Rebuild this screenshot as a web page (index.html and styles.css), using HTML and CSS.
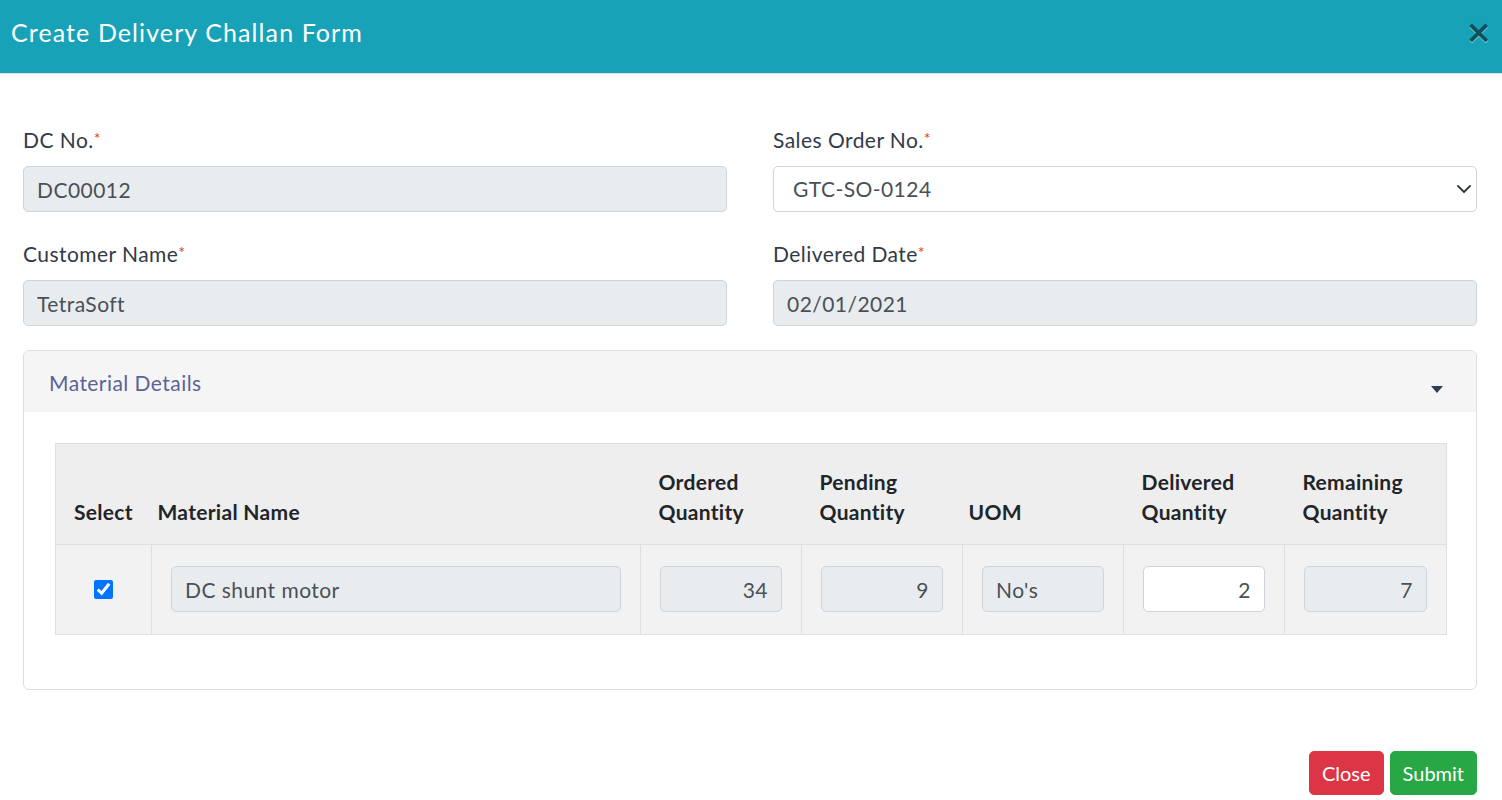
FILE: index.html
```html
<!DOCTYPE html>
<html lang="en">
<head>
<meta charset="utf-8">
<title>Create Delivery Challan Form</title>
<link rel="stylesheet" href="styles.css">
</head>
<body>
<div class="modal">
  <header class="modal-header">
    <h1 class="modal-title">Create Delivery Challan Form</h1>
    <button class="close" type="button" aria-label="Close">×</button>
  </header>
  <main class="modal-body">
    <div class="form-grid">
      <div class="form-group">
        <label class="form-label">DC No.<span class="req">*</span></label>
        <input class="form-control" type="text" value="DC00012" disabled>
      </div>
      <div class="form-group">
        <label class="form-label">Sales Order No.<span class="req">*</span></label>
        <div class="select-wrap">
          <select class="form-control form-select">
            <option>GTC-SO-0124</option>
          </select>
          <svg class="select-chevron" width="14" height="8" viewBox="0 0 14 8"><path d="M1 1l6 6 6-6" fill="none" stroke="#343a40" stroke-width="1.8" stroke-linecap="round" stroke-linejoin="round"/></svg>
        </div>
      </div>
      <div class="form-group">
        <label class="form-label">Customer Name<span class="req">*</span></label>
        <input class="form-control" type="text" value="TetraSoft" disabled>
      </div>
      <div class="form-group">
        <label class="form-label">Delivered Date<span class="req">*</span></label>
        <input class="form-control" type="text" value="02/01/2021" disabled>
      </div>
    </div>

    <section class="card">
      <div class="card-header">
        <span class="card-title">Material Details</span>
        <svg class="caret" width="12" height="7" viewBox="0 0 12 7"><path d="M0 0h12L6 7z" fill="#2c3e50"/></svg>
      </div>
      <div class="card-body">
        <table class="table">
          <colgroup>
            <col style="width:96px"><col style="width:489px"><col style="width:161px"><col style="width:161px"><col style="width:161px"><col style="width:161px"><col style="width:162px">
          </colgroup>
          <thead>
            <tr>
              <th>Select</th>
              <th class="th-tight">Material Name</th>
              <th>Ordered Quantity</th>
              <th>Pending Quantity</th>
              <th class="th-tight">UOM</th>
              <th>Delivered Quantity</th>
              <th>Remaining Quantity</th>
            </tr>
          </thead>
          <tbody>
            <tr>
              <td class="td-check"><input class="check" type="checkbox" checked></td>
              <td><input class="form-control" type="text" value="DC shunt motor" disabled></td>
              <td><input class="form-control num" type="text" value="34" disabled></td>
              <td><input class="form-control num" type="text" value="9" disabled></td>
              <td><input class="form-control" type="text" value="No's" disabled></td>
              <td><input class="form-control num editable" type="text" value="2"></td>
              <td><input class="form-control num" type="text" value="7" disabled></td>
            </tr>
          </tbody>
        </table>
      </div>
    </section>
  </main>
  <footer class="modal-footer">
    <button class="btn btn-danger" type="button">Close</button>
    <button class="btn btn-success" type="button">Submit</button>
  </footer>
</div>
</body>
</html>
```
FILE: styles.css
```css
* { box-sizing: border-box; }
html, body { margin: 0; padding: 0; background: #fff; }
body {
  font-family: Lato, "Open Sans", "Liberation Sans", sans-serif;
  font-size: 21px;
  line-height: 30px;
  letter-spacing: 0.45px;
  color: #313a46;
  width: 1502px;
  height: 800px;
  overflow: hidden;
}

.modal-header {
  height: 74px;
  background: #18a2b8;
  border-bottom: 1px solid #e3e6e9;
  display: flex;
  justify-content: space-between;
  align-items: flex-start;
  padding: 14px 10px 0 11px;
}
.modal-title {
  margin: 0;
  font-size: 25px;
  line-height: 36px;
  font-weight: 400;
  color: #fff;
  letter-spacing: 1.1px;
}
.close {
  background: none;
  border: 0;
  padding: 0;
  margin-top: -2px;
  font-family: "DejaVu Sans", sans-serif;
  font-size: 32px;
  line-height: 40px;
  font-weight: 700;
  color: #000;
  opacity: .5;
  text-shadow: 0 1px 0 #fff;
  cursor: pointer;
}

.modal-body {
  padding: 51px 25px 0 23px;
}
.form-grid {
  display: grid;
  grid-template-columns: 1fr 1fr;
  column-gap: 46px;
}
.form-group { margin-bottom: 27px; }
.form-grid .form-group:nth-child(n+3) { margin-bottom: 24px; }
.form-label {
  display: block;
  height: 30px;
  margin-bottom: 11px;
  color: #313a46;
}
.req {
  color: #e3342f;
  font-size: 16px;
  line-height: 0;
  vertical-align: 4px;
  letter-spacing: 0;
}

.form-control {
  display: block;
  width: 100%;
  height: 46px;
  padding: 7px 13px;
  font-family: inherit;
  font-size: 21px;
  line-height: 30px;
  letter-spacing: 0.45px;
  color: #495057;
  background: #fff;
  border: 1px solid #ced4da;
  border-radius: 5px;
  outline: none;
}
.form-control:disabled { background: #e9ecef; opacity: 1; color: #495057; }
.select-wrap { position: relative; }
.form-select {
  appearance: none;
  -webkit-appearance: none;
  padding-left: 19px;
  color: #495057;
}
.select-chevron {
  position: absolute;
  right: 6px;
  top: 19px;
  pointer-events: none;
}

.card {
  border: 1px solid #dddddd;
  border-radius: 6px;
  overflow: hidden;
}
.card-header {
  background: #f5f5f5;
  padding: 17px 33px 14px 25px;
  display: flex;
  justify-content: space-between;
  align-items: flex-start;
  height: 61px;
}
.card-title { color: #5a6399; }
.caret { margin-top: 18px; }
.card-body {
  padding: 31px 30px 54px 31px;
}

.table {
  width: 1391px;
  border-collapse: collapse;
  table-layout: fixed;
  border: 1px solid #dfdfdf;
}
.table th {
  background: #eeeeee;
  text-align: left;
  vertical-align: bottom;
  font-weight: 700;
  color: #212529;
  letter-spacing: 0.3px;
  padding: 23px 8px 17px 18px;
  border-bottom: 1px solid #dfdfdf;
}
.table th.th-tight { padding-left: 6px; }
.table td {
  background: #f2f2f2;
  padding: 21px 19px 22px 19px;
  border-left: 1px solid #dfdfdf;
  vertical-align: middle;
}
.table td:first-child { border-left: 0; }
.check {
  display: block;
  width: 19px;
  height: 19px;
  margin: 0 auto;
  accent-color: #0075ff;
}
.num { text-align: right; }
.editable { background: #fff; }

.modal-footer {
  display: flex;
  justify-content: flex-end;
  gap: 6px;
  padding: 61px 25px 0 0;
}
.btn {
  height: 44px;
  padding: 6px 12px;
  font-family: inherit;
  font-size: 20px;
  line-height: 30px;
  letter-spacing: 0;
  color: #fff;
  border: 1px solid transparent;
  border-radius: 5px;
  cursor: pointer;
}
.btn-danger { background: #dc3545; border-color: #dc3545; }
.btn-success { background: #28a745; border-color: #28a745; }
```
